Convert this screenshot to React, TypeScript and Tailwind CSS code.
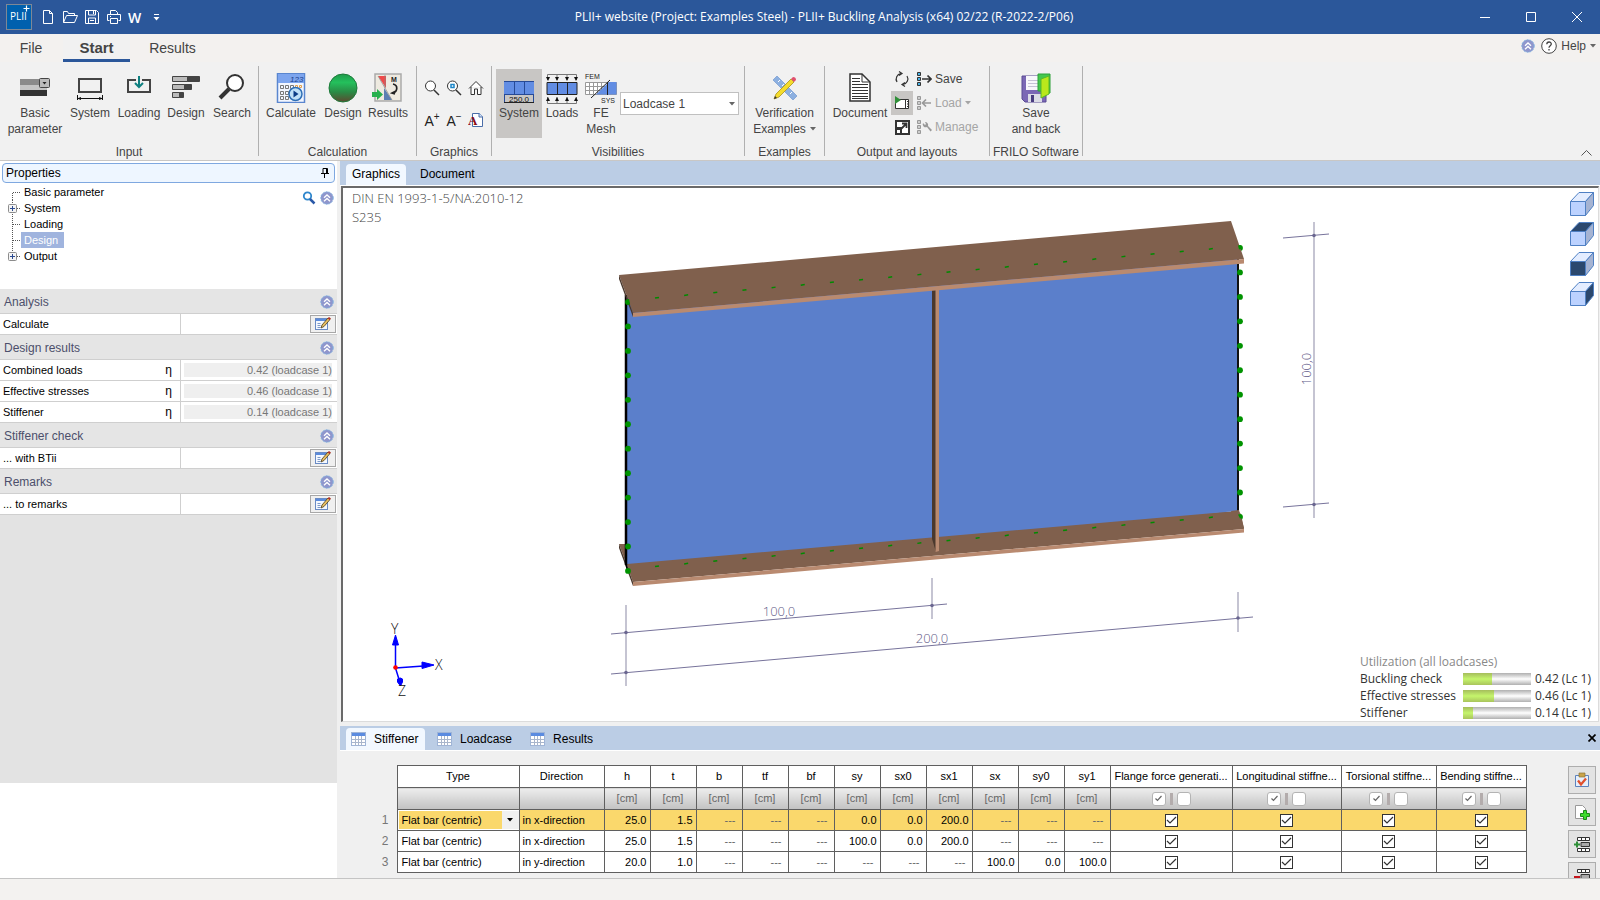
import React, { useState } from 'react';

/* ---------- small shared pieces ---------- */

const Caret: React.FC<{ className?: string }> = ({ className = 'fill-[#666]' }) => (
  <svg width="6" height="4" viewBox="0 0 6 4" className={className} aria-hidden="true">
    <path d="M0 0h6L3 3.6z" />
  </svg>
);

const CollapseBadge: React.FC = () => (
  <svg width="14" height="14" viewBox="0 0 14 14" aria-hidden="true">
    <circle cx="7" cy="7" r="6.2" fill="#8f96cc" stroke="#7fb0e0" strokeDasharray="2 1" />
    <path d="M4 6.8 7 4l3 2.8M4 10.3 7 7.5l3 2.8" fill="none" stroke="#fff" strokeWidth="1.3" />
  </svg>
);

const TickBox: React.FC<{ label: string; on?: boolean; soft?: boolean }> = ({ label, on = false, soft = false }) => {
  const [checked, setChecked] = useState(on);
  return (
    <span className="inline-grid place-items-center align-middle">
      <input
        type="checkbox"
        aria-label={label}
        checked={checked}
        onChange={() => setChecked(!checked)}
        className={
          soft
            ? 'col-start-1 row-start-1 size-3.5 appearance-none rounded-[3px] border border-[#b4b4b4] bg-white'
            : 'col-start-1 row-start-1 size-[13px] appearance-none border border-[#333] bg-white'
        }
      />
      {checked && (
        <svg width="11" height="11" viewBox="0 0 11 11" className="pointer-events-none col-start-1 row-start-1">
          <path d={soft ? 'M2.5 5.5l2 2 4-4.5' : 'M1 5l3 3 6-6'} fill="none" stroke={soft ? '#666' : '#333'} strokeWidth="1.2" />
        </svg>
      )}
    </span>
  );
};

/* ---------- title bar ---------- */

const TitleBar: React.FC = () => (
  <header className="flex h-[34px] shrink-0 items-center bg-[#2b579a] text-white">
    <div className="flex flex-1 items-center">
      <svg width="26" height="26" viewBox="0 0 26 26" className="ml-1.5">
        <rect x=".5" y=".5" width="25" height="25" fill="#0060ae" stroke="#7e8896" />
        <text x="4" y="16" fontSize="10" fill="#fff" fontFamily="Open Sans, sans-serif">PLII</text>
        <path d="M20.500 1.500v6M17.500 4.500h6" stroke="#fff" strokeWidth="1.2" />
      </svg>
      <button aria-label="New" className="ml-2.5">
        <svg width="12" height="16" viewBox="0 0 12 16" fill="none" stroke="#fff">
          <path d="M1.5 1.5h6l3 3v10h-9zM7.5 1.5v3h3" />
        </svg>
      </button>
      <button aria-label="Open" className="ml-2">
        <svg width="16" height="14" viewBox="0 0 16 14" fill="none" stroke="#fff">
          <path d="M1.5 12.5v-11h4l1 2h6v2M1.5 12.5l3-7h11l-3 7z" />
        </svg>
      </button>
      <button aria-label="Save" className="ml-1.5">
        <svg width="16" height="16" viewBox="0 0 16 16" fill="none" stroke="#fff">
          <path d="M1.5 1.5h11l2 2v11h-13zM4.5 1.5v4.500h7v-4.500M4.5 14.5v-5.500h7v5.500M9.5 2v3M6 11.5h4" />
        </svg>
      </button>
      <button aria-label="Print" className="ml-1.5">
        <svg width="16" height="16" viewBox="0 0 16 16" fill="none" stroke="#fff">
          <path d="M4.5 5.5v-4h5l2 2v2M3.5 11.5h-2v-6h13v6h-2M4.5 9.5h7v5h-7zM4 7.5h1" />
        </svg>
      </button>
      <button aria-label="Export to Word" className="ml-1.5 font-[Open_Sans,sans-serif] text-[14px] font-semibold">W</button>
      <button aria-label="Customize" className="ml-3">
        <svg width="7" height="7" viewBox="0 0 7 7" fill="#fff">
          <path d="M1 0h5v1H1zM.5 3h6L3.5 6.500z" />
        </svg>
      </button>
    </div>
    <h1 className="pl-12 font-[Open_Sans,sans-serif] text-[12px]">
      PLII+ website (Project: Examples Steel) - PLII+ Buckling Analysis (x64) 02/22 (R-2022-2/P06)
    </h1>
    <div className="flex flex-1 items-center justify-end">
      <button aria-label="Minimize" className="flex w-[46px] justify-center">
        <svg width="10" height="10" viewBox="0 0 10 10"><path d="M0 5.5h10" stroke="#fff" /></svg>
      </button>
      <button aria-label="Maximize" className="flex w-[46px] justify-center">
        <svg width="10" height="10" viewBox="0 0 10 10"><path d="M.5.5h9v9h-9z" fill="none" stroke="#fff" /></svg>
      </button>
      <button aria-label="Close" className="flex w-[46px] justify-center">
        <svg width="10" height="10" viewBox="0 0 10 10"><path d="M0 0l10 10M10 0L0 10" stroke="#fff" /></svg>
      </button>
    </div>
  </header>
);

const MenuTabs: React.FC = () => (
  <nav className="flex h-7 shrink-0 items-stretch bg-[#f3f1ef] text-[14px] text-[#444]">
    <button className="w-[62px]">File</button>
    <button className="ml-px w-[67px] border-b-3 border-[#2b579a] bg-[#f1f1f1] pt-[3px] text-[15px] font-bold">Start</button>
    <button className="w-[85px]">Results</button>
    <div className="flex-1" />
    <div className="flex items-center gap-1.5 pr-1 pb-1 text-[12px]">
      <button aria-label="Collapse"><CollapseBadge /></button>
      <button className="flex items-center gap-1">
        <svg width="16" height="16" viewBox="0 0 16 16" fill="none" stroke="#444">
          <circle cx="8" cy="8" r="7.3" fill="#fff" />
          <path d="M5.8 6.3c0-3 4.5-3 4.5-.3 0 1.7-2.300 1.800-2.300 3.800M8 11v1.500" strokeWidth="1.3" />
        </svg>
        Help
        <Caret />
      </button>
    </div>
  </nav>
);

/* ---------- ribbon icons ---------- */

const IconBasic = () => (
  <svg width="32" height="26" viewBox="0 0 32 26">
    <path d="M1 6h27v6H1z" fill="#8a8a8a" />
    <path d="M1 12h27v5H1z" fill="#c4c4c4" />
    <path d="M1 17h27v6H1z" fill="#333" />
    <rect x="20.500" y="5.500" width="10" height="9" rx="1" fill="#bcbcbc" stroke="#444" />
    <path d="M23.500 9h4l-2 2.500z" fill="#222" />
  </svg>
);
const IconSystem = () => (
  <svg width="28" height="28" viewBox="0 0 28 28" fill="none" stroke="#444">
    <path d="M3 6h22v13H3z" strokeWidth="2" />
    <path d="M1.5 22v5M26.5 22v5M2 25.5h24" stroke="#111" />
    <path d="M1 25.5l4-1.5v3zM27 25.5l-4-1.5v3z" fill="#111" stroke="none" />
  </svg>
);
const IconLoading = () => (
  <svg width="26" height="28" viewBox="0 0 26 28" fill="none">
    <path d="M10 7H2v12h22V7h-8" stroke="#444" strokeWidth="2" />
    <path d="M13 3v11M9 10l4 4 4-4" stroke="#0e8080" strokeWidth="2" />
  </svg>
);
const IconDesign = () => (
  <svg width="30" height="26" viewBox="0 0 30 26" stroke="#444">
    <path d="M1.5 3.5h15v5h-15zM1.5 11.5h12v5h-12zM1.5 19.500h7v5h-7z" fill="#bbb" />
    <path d="M16.5 3.5h12v5h-12zM13.5 11.5h7v5h-7zM8.5 19.500h4v5h-4z" fill="#444" />
  </svg>
);
const IconSearch = () => (
  <svg width="28" height="28" viewBox="0 0 28 28" fill="none" stroke="#333">
    <circle cx="17" cy="10" r="8" strokeWidth="2" fill="#fff" />
    <path d="M11 16l-9 9" strokeWidth="4" />
  </svg>
);
const IconCalculate = () => (
  <svg width="30" height="30" viewBox="0 0 30 30">
    <rect x="1.500" y=".5" width="27" height="29" fill="#f2f6ff" stroke="#5a86cf" strokeWidth="1.5" />
    <path d="M2 1h26v9H2z" fill="#7da5ee" />
    <text x="14" y="8.500" fontSize="8" fontStyle="italic" fill="#1b3f8b" fontFamily="Liberation Sans, sans-serif">123</text>
    <g fill="none" stroke="#777">
      <path d="M4.5 12.5h3v3h-3zM9.5 12.5h3v3h-3zM14.5 12.5h3v3h-3zM4.5 18.5h3v3h-3zM9.5 18.5h3v3h-3zM4.5 23.5h3v3h-3zM9.5 23.5h3v3h-3z" />
      <path d="M19.5 12.5h2v2h-2zM23.500 12.5h2v2h-2z" stroke="#e3a04b" />
    </g>
    <circle cx="19.500" cy="21" r="6.500" fill="#bfe0f8" stroke="#2e6eb5" strokeWidth="1.5" />
    <path d="M17.5 17.5v7l5-3.500z" fill="#0b3b86" />
  </svg>
);
const IconGreenBall = () => (
  <svg width="30" height="30" viewBox="0 0 30 30">
    <defs>
      <linearGradient id="ball" x1="0" y1="0" x2="0" y2="1">
        <stop offset="0" stopColor="#1f9a4b" />
        <stop offset=".3" stopColor="#24c05c" />
        <stop offset=".65" stopColor="#2a8a45" />
        <stop offset="1" stopColor="#5c4a30" />
      </linearGradient>
    </defs>
    <circle cx="15" cy="15" r="14" fill="url(#ball)" stroke="#1d7a3a" />
  </svg>
);
const IconResults = () => (
  <svg width="32" height="30" viewBox="0 0 32 30">
    <rect x="3" y="1" width="26" height="27" fill="#eeeae0" stroke="#aaa" strokeWidth="1.5" />
    <path d="M6 3h8v12z" fill="#f04a4a" />
    <path d="M12 15v12h8z" fill="#5c7fb2" />
    <path d="M13 15V2M6 3l14 24" stroke="#888" strokeWidth=".7" />
    <text x="19" y="9" fontSize="7" fontWeight="bold" fill="#222" fontFamily="Liberation Sans, sans-serif">M</text>
    <path d="M21 11c5 1 5 7 0 9M24 18l-4 2 3 1" fill="none" stroke="#222" strokeWidth="1.7" />
    <path d="M0 19h5v-3l6 5.500-6 5.500v-3H0z" fill="#27b04e" />
  </svg>
);
const IconVisSystem = () => (
  <svg width="32" height="30" viewBox="0 0 32 30">
    <path d="M1 8h30v14H1z" fill="#628de3" />
    <path d="M1 8.500h30M1 21.500h30M11.500 8v14M21.500 8v14M1.500 22v7M30.500 22v7" stroke="#274a96" />
    <path d="M1 29.500h30" stroke="#222" />
    <text x="16" y="29" fontSize="8" textAnchor="middle" fill="#111" fontFamily="Liberation Sans, sans-serif">250.0</text>
  </svg>
);
const IconLoads = () => (
  <svg width="32" height="32" viewBox="0 0 32 32">
    <path d="M1 9h30v13H1z" fill="#628de3" />
    <path d="M1 9.500h30v12H1zM11.500 9v13M21.500 9v13" fill="none" stroke="#222" />
    <path d="M1.500 7V1.500h29V7M11 2v5M21 2v5M1.500 24v6.500h29V24M11 24v6M21 24v6" fill="none" stroke="#777" />
    <path d="M0 4h4L2 8zM9 4h4l-2 4zM19 4h4l-2 4zM28 4h4l-2 4zM0 28h4l-2-4zM9 28h4l-2-4zM19 28h4l-2-4zM28 28h4l-2-4z" fill="#111" />
  </svg>
);
const IconMesh = () => (
  <svg width="34" height="32" viewBox="0 0 34 32">
    <text x="1" y="6" fontSize="7" fill="#222" fontFamily="Liberation Sans, sans-serif">FEM</text>
    <text x="17" y="30" fontSize="7" fill="#222" fontFamily="Liberation Sans, sans-serif">SYS</text>
    <path d="M1.500 9.500h31v12h-31zM1 13.500h20M1 17.500h16M5.500 9v13M9.500 9v13M13.500 9v13M17.500 9v8" fill="#fff" stroke="#999" />
    <path d="M12 21.500L25 9h7.500v12.500z" fill="#628de3" />
    <path d="M23.500 9v13M7 25L26 7" stroke="#222" />
  </svg>
);
const IconVerify = () => (
  <svg width="28" height="28" viewBox="0 0 28 28">
    <g transform="translate(1 2)">
      <path d="M1 5l4-4 20 20-4 4z" fill="#8db0e0" stroke="#8aaad8" />
      <path d="M6 7l2-2M10 11l2-2M14 15l2-2M18 19l2-2" stroke="#fff" />
      <path d="M2 24l2-5L19 4l3 3L7 22z" fill="#f4dc2c" stroke="#a8911d" strokeWidth=".8" />
      <path d="M19 4l2-2q3 0 3 3l-2 2z" fill="#e0506e" />
      <path d="M2 24l1-3 2 2z" fill="#333" />
    </g>
  </svg>
);
const IconDocument = () => (
  <svg width="22" height="29" viewBox="0 0 22 29" fill="none" stroke="#333">
    <path d="M1 1h12l8 8v19H1z" fill="#fff" strokeWidth="1.5" />
    <path d="M13 1v8h8M3 5.500h8M3 8.500h8M3 11.500h16M3 14.500h16M3 17.500h16M3 20.500h16M3 23.500h16M3 25.500h16" />
  </svg>
);
const IconSaveBack = () => (
  <svg width="30" height="30" viewBox="0 0 30 30">
    <path d="M1 3h24v26H4l-3-3z" fill="#7b68b5" stroke="#5a4a94" />
    <path d="M5 3h14v14H5z" fill="#f7f7fb" />
    <path d="M7 7.500h10M7 10.500h10M7 13.500h10" stroke="#c5c3d6" />
    <path d="M7 21h14v8H7z" fill="#dcdce6" />
    <path d="M10 22h3v7h-3z" fill="#4a3d80" />
    <path d="M17 1h12v19h-4v-2h-8z" fill="#43c84e" stroke="#2da038" />
    <path d="M20 6l8-3v18l-8 4z" fill="#b9e81c" stroke="#57b82a" />
  </svg>
);

const LayoutIcon: React.FC<{ kind: 'save' | 'load' | 'manage' }> = ({ kind }) => {
  const c = kind === 'save' ? '#333' : '#999';
  return (
    <svg width="15" height="15" viewBox="0 0 15 15">
      <path d="M.5.5h3v3h-3zM.5 5.500h3v3h-3zM.5 10.500h3v3h-3z" fill={kind === 'save' ? '#4bb3e8' : '#ccc'} stroke={c} />
      {kind === 'save' && <path d="M5 7h9M10.500 3.500L14 7l-3.500 3.500" fill="none" stroke={c} strokeWidth="1.7" />}
      {kind === 'load' && <path d="M14 7H6M9 3.500L5.500 7 9 10.500" fill="none" stroke={c} strokeWidth="1.7" />}
      {kind === 'manage' && <path d="M6 3a3 3 0 0 0 4 4l3.500 4.500 1.500-1.500L11 6a3 3 0 0 0-3-4l1 2-1 1z" fill={c} />}
    </svg>
  );
};

/* ---------- ribbon ---------- */

const Group: React.FC<{ title: string; width: string; pad?: string; children: React.ReactNode }> = ({ title, width, pad = '', children }) => (
  <>
    <section className={`flex shrink-0 flex-col ${width}`}>
      <div className={`flex flex-1 items-start pt-[7px] ${pad}`}>{children}</div>
      <h2 className="h-4 text-center leading-4 whitespace-nowrap">{title}</h2>
    </section>
    <div className="my-1 w-px shrink-0 bg-[#b0b0b0]" />
  </>
);

const BigButton: React.FC<{ icon: React.ReactNode; label: React.ReactNode; width: string; active?: boolean }> = ({ icon, label, width, active }) => (
  <button className={`flex h-[69px] shrink-0 flex-col items-center pt-1 leading-4 ${width} ${active ? 'bg-[#c8c6c4]' : ''}`}>
    <span className="flex h-8 items-start justify-center">{icon}</span>
    <span className="text-center">{label}</span>
  </button>
);

const graphicsTools = [
  { name: 'Zoom', body: <><circle cx="6.5" cy="6" r="5" fill="#fff" /><path d="M10 10l5 5" strokeWidth="1.5" /></> },
  { name: 'Zoom window', body: <><circle cx="6.5" cy="6" r="5" fill="#fff" /><path d="M10 10l5 5" strokeWidth="1.5" /><path d="M5 4.500h3v3H5z" stroke="#1d86c8" strokeWidth="1.5" /></> },
  { name: 'Home', body: <path d="M1 8.500L8 1.500l7 7M3 7v7.500h3.500V9h3v5.500H13V7" fill="#fff" /> },
];

const Ribbon: React.FC = () => (
  <div className="flex h-[99px] shrink-0 border-b border-[#c9c7c5] bg-[#f1f1f1] text-[12px] text-[#444]">
    <Group title="Input" width="w-[258px]" pad="pl-[6px]">
      <BigButton width="w-[58px]" icon={<IconBasic />} label={<>Basic<br />parameter</>} />
      <BigButton width="w-[52px]" icon={<IconSystem />} label="System" />
      <BigButton width="w-[46px]" icon={<IconLoading />} label="Loading" />
      <BigButton width="w-[48px]" icon={<IconDesign />} label="Design" />
      <BigButton width="w-[44px]" icon={<IconSearch />} label="Search" />
    </Group>
    <Group title="Calculation" width="w-[157px]" pad="pl-[2px]">
      <BigButton width="w-[60px]" icon={<IconCalculate />} label="Calculate" />
      <BigButton width="w-[44px]" icon={<IconGreenBall />} label="Design" />
      <BigButton width="w-[46px]" icon={<IconResults />} label="Results" />
    </Group>
    <Group title="Graphics" width="w-[74px]">
      <div className="grid grid-cols-3 gap-x-1.5 gap-y-4 pt-[11px] pl-[7px]">
        {graphicsTools.map((tool) => (
          <button key={tool.name} aria-label={tool.name} className="size-4">
            <svg width="16" height="16" viewBox="0 0 16 16" fill="none" stroke="#333">{tool.body}</svg>
          </button>
        ))}
        <button className="flex size-4 items-start justify-center text-[14px] leading-[18px] text-[#222]">
          A<span className="text-[10px] leading-2.5">+</span>
        </button>
        <button className="flex size-4 items-start justify-center text-[14px] leading-[18px] text-[#222]">
          A<span className="text-[10px] leading-2.5">−</span>
        </button>
        <button aria-label="Text style" className="size-4">
          <svg width="16" height="16" viewBox="0 0 16 16">
            <path d="M4.500 1.500h7l3 3v10h-10z" fill="#fff" stroke="#4a6da8" />
            <path d="M11 1v4h4" fill="#cfe0f6" stroke="#4a6da8" />
            <text x="0" y="13" fontSize="13" fontWeight="bold" fill="#8c0a14" fontFamily="Liberation Serif, serif">A</text>
          </svg>
        </button>
      </div>
    </Group>
    <Group title="Visibilities" width="w-[252px]" pad="pl-1">
      <BigButton width="w-[46px]" active icon={<IconVisSystem />} label="System" />
      <BigButton width="w-10" icon={<IconLoads />} label="Loads" />
      <BigButton width="w-[38px]" icon={<IconMesh />} label={<>FE<br />Mesh</>} />
      <div className="mt-[23px] grid items-center">
        <select aria-label="Loadcase" className="col-start-1 row-start-1 h-[23px] w-[119px] appearance-none border border-[#c0c0c0] bg-white pl-0.5">
          <option>Loadcase 1</option>
        </select>
        <span className="pointer-events-none col-start-1 row-start-1 mr-1 justify-self-end"><Caret /></span>
      </div>
    </Group>
    <Group title="Examples" width="w-[79px]">
      <BigButton
        width="w-[79px]"
        icon={<IconVerify />}
        label={<>Verification<br /><span className="flex items-center gap-1">Examples <Caret /></span></>}
      />
    </Group>
    <Group title="Output and layouts" width="w-[164px]" pad="pl-1">
      <BigButton width="w-[62px]" icon={<IconDocument />} label="Document" />
      <div className="-mt-0.5 flex flex-col">
        <button aria-label="Refresh" className="flex h-6 w-[22px] items-center justify-center">
          <svg width="16" height="16" viewBox="0 0 16 16" fill="none" stroke="#333" strokeWidth="1.2">
            <path d="M7 2.500A5.600 5.600 0 0 0 3 11M9 13.500A5.600 5.600 0 0 0 13 5M5 .5l3 2-3 2M11 11.500l-3 2 3 2" />
          </svg>
        </button>
        <button aria-label="Run" className="flex h-6 w-[22px] items-center justify-center bg-[#c8c6c4]">
          <svg width="16" height="14" viewBox="0 0 16 14">
            <path d="M1.500 3.500h13v9h-13z" fill="#fff" stroke="#333" />
            <path d="M11.500 3v10M13 5.500h1M13 8h1M13 10.500h1" stroke="#333" />
            <path d="M1 0l6 4-6 4z" fill="#2f8f38" />
          </svg>
        </button>
        <button aria-label="Expand" className="flex h-6 w-[22px] items-center justify-center">
          <svg width="15" height="15" viewBox="0 0 15 15">
            <path d="M1 1h13v13H1z" fill="#fff" stroke="#333" strokeWidth="2" />
            <path d="M0 7h7v8H0z" fill="#333" />
            <path d="M2 10h3v3H2z" fill="#fff" />
            <path d="M6.500 8.500l5-5M7 3.500h4.500V8" fill="none" stroke="#333" strokeWidth="1.8" />
          </svg>
        </button>
      </div>
      <div className="-mt-0.5 flex flex-col pl-1">
        <button className="flex h-6 items-center gap-[3px]"><LayoutIcon kind="save" />Save</button>
        <button className="flex h-6 items-center gap-[3px] text-[#a5a5a5]"><LayoutIcon kind="load" />Load <Caret className="fill-[#a5a5a5]" /></button>
        <button className="flex h-6 items-center gap-[3px] text-[#a5a5a5]"><LayoutIcon kind="manage" />Manage</button>
      </div>
    </Group>
    <Group title="FRILO Software" width="w-[92px]">
      <BigButton width="w-[92px]" icon={<IconSaveBack />} label={<>Save<br />and back</>} />
    </Group>
    <div className="flex flex-1 items-end justify-end pr-2 pb-1">
      <button aria-label="Collapse ribbon">
        <svg width="11" height="6" viewBox="0 0 11 6"><path d="M.5 5.500l5-5 5 5" fill="none" stroke="#555" /></svg>
      </button>
    </div>
  </div>
);

/* ---------- properties panel ---------- */

const treeItems = [
  { label: 'Basic parameter' },
  { label: 'System', expandable: true },
  { label: 'Loading' },
  { label: 'Design', selected: true },
  { label: 'Output', expandable: true },
];

const EditButton: React.FC<{ label: string }> = ({ label }) => (
  <button aria-label={label} className="mr-px flex h-[18px] w-[26px] items-center justify-center border border-[#a8a8a8] bg-[#f0f0f0]">
    <svg width="16" height="14" viewBox="0 0 16 14">
      <rect x=".5" y="1.500" width="12" height="11" fill="#f4f8ff" stroke="#6a8bc4" />
      <path d="M1 2h11v2H1z" fill="#5b8bdc" />
      <path d="M2.500 6.500h3M2.500 8.500h3M2.500 10.500h3" stroke="#7c99c8" />
      <path d="M6 11l1-3 6-7 2 1.500-6 7z" fill="#e8bf62" stroke="#4a3b1c" strokeWidth=".8" />
      <path d="M12.500 1.500L14 0l2 1.500-1.300 1.500z" fill="#b03428" />
    </svg>
  </button>
);

const PropertySection: React.FC<{ title: string; children: React.ReactNode }> = ({ title, children }) => (
  <section>
    <h3 className="flex h-[25px] items-center justify-between border-b border-[#cfcfcf] bg-[#e5e5e5] pt-0.5 pr-[3px] pl-1 text-[12px] text-[#4c4f6b]">
      {title}
      <button aria-label={`Collapse ${title}`}><CollapseBadge /></button>
    </h3>
    {children}
  </section>
);

const PropertyRow: React.FC<{ label: string; symbol?: string; value?: string }> = ({ label, symbol, value }) => (
  <div className="flex h-[21px] border-b border-[#cfcfcf] bg-white">
    <div className="flex w-[181px] items-center justify-between border-r border-[#cfcfcf] pr-2 pl-[3px]">
      <span>{label}</span>
      <span className="text-[12px]">{symbol}</span>
    </div>
    <div className="flex flex-1 items-center justify-end">
      {value ? (
        <output className="mr-[5px] ml-[3px] h-3.5 flex-1 bg-[#efefef] text-right leading-3.5 text-[#777]">{value}</output>
      ) : (
        <EditButton label={label} />
      )}
    </div>
  </div>
);

const PropertiesPanel: React.FC = () => (
  <aside className="flex w-[337px] shrink-0 flex-col bg-white text-[11px] text-black">
    <div className="mx-[2px] mt-[2px] flex h-5 shrink-0 items-center justify-between rounded-sm border border-[#7fa8e0] bg-[#eef6ff] px-[3px] text-[12px]">
      Properties
      <button aria-label="Pin" className="mr-0.5">
        <svg width="8" height="10" viewBox="0 0 8 10" fill="none" stroke="#000"><path d="M2 .5h4.500v5H2zM5.500 1v5M0 5.500h8M3.500 6v4" /></svg>
      </button>
    </div>
    <div className="flex h-[106px] shrink-0 pt-px">
      <ul className="flex-1">
        {treeItems.map((item) => (
          <li key={item.label} className="flex h-4 items-center">
            <svg width="13" height="16" viewBox="0 0 13 16" className="ml-2">
              <path d={item.label === 'Basic parameter' ? 'M4.5 9v7M5 8.5h8' : item.label === 'Output' ? 'M4.5 0v8M5 8.5h8' : 'M4.5 0v16M5 8.5h8'} stroke="#555" strokeDasharray="1 1" fill="none" />
              {item.expandable && (
                <>
                  <rect x=".5" y="4.500" width="8" height="8" rx="1" fill="#f4f4f4" stroke="#8c8c8c" />
                  <path d="M2 8.500h5M4.500 6v5" stroke="#2b4a90" />
                </>
              )}
            </svg>
            <button className={item.selected ? 'h-4 bg-[#a0b4de] pr-1.5 pl-[3px] leading-4 text-white' : 'h-4 pl-[3px] leading-4'}>{item.label}</button>
          </li>
        ))}
      </ul>
      <div className="flex items-start gap-1 pt-[7px] pr-[3px]">
        <button aria-label="Find property">
          <svg width="14" height="14" viewBox="0 0 14 14" fill="none">
            <circle cx="5.500" cy="5" r="3.700" stroke="#2e86cc" strokeWidth="1.8" />
            <path d="M8 8l4.500 4.500" stroke="#2a59a8" strokeWidth="2.5" />
          </svg>
        </button>
        <button aria-label="Collapse all"><CollapseBadge /></button>
      </div>
    </div>
    <PropertySection title="Analysis">
      <PropertyRow label="Calculate" />
    </PropertySection>
    <PropertySection title="Design results">
      <PropertyRow label="Combined loads" symbol="η" value="0.42 (loadcase 1)" />
      <PropertyRow label="Effective stresses" symbol="η" value="0.46 (loadcase 1)" />
      <PropertyRow label="Stiffener" symbol="η" value="0.14 (loadcase 1)" />
    </PropertySection>
    <PropertySection title="Stiffener check">
      <PropertyRow label="... with BTii" />
    </PropertySection>
    <PropertySection title="Remarks">
      <PropertyRow label="... to remarks" />
    </PropertySection>
    <div className="flex-1 bg-[#e3e3e3]" />
    <div className="h-[95px] shrink-0" />
  </aside>
);

/* ---------- 3D model view ---------- */

const supports = Array.from({ length: 12 }, (_, i) => i);
const rivets = Array.from({ length: 20 }, (_, i) => i);

const ModelDrawing: React.FC = () => (
  <svg viewBox="343 188 1255 533" className="h-full w-full" role="img" aria-label="Stiffened plate model">
    {/* bottom flange */}
    <path d="M619 544h8l611-33 3 3 3 15-611 53z" fill="#80604d" />
    <path d="M633 582l611-53v3.500L633 586z" fill="#b98a70" />
    <path d="M619 544l14 38v4l-14-38z" fill="#4a382d" />
    {/* web */}
    <path d="M627 295L1237 245v266L627 564z" fill="#5b7fcb" />
    <path d="M626 295v270" stroke="#000" strokeWidth="2.500" />
    <path d="M626 564l1.500 6" stroke="#000" strokeWidth="1.500" />
    <path d="M1238 258v253" stroke="#111" strokeWidth="2" />
    {/* supports along the vertical edges */}
    {supports.map((i) => (
      <g key={i} fill="#009300">
        <circle cx="628" cy={302 + i * 24.45} r="2.900" />
        <circle cx="1240" cy={248 + i * 24.45} r="2.900" />
      </g>
    ))}
    <path d="M1231 511l8-1 5 18-9 1z" fill="#80604d" />
    <path d="M1238 514.500q5-1 4 3.500l-2 .5z" fill="#009300" />
    {/* stiffener */}
    <path d="M932 289h4v263l-4-13z" fill="#4a382d" />
    <path d="M935.500 289h3.500v262l-3.500 1z" fill="#b98a70" />
    {/* top flange */}
    <path d="M619 275l612-54 13 38-611 54z" fill="#80604d" />
    <path d="M633 313l611-54v4.500L633 317z" fill="#b98a70" />
    <path d="M619 275l14 38v4l-14-38z" fill="#4a382d" />
    <path d="M626 301a3 3 0 0 1 3-2l1 5q-3 2-4-1zM1238 245.500q4-1 4 3l-3 1z" fill="#009300" />
    {rivets.map((i) => (
      <g key={i} stroke="#008a00" strokeWidth="1.500">
        <path d={`M${655 + i * 29.15} ${298 - i * 2.57}l4-.6`} />
        <path d={`M${655 + i * 29.15} ${566.5 - i * 2.57}l4-.6`} />
      </g>
    ))}
    {/* dimension lines */}
    <g stroke="#b3b1c4" strokeWidth="1.500">
      <path d="M1314 222v296M626 605v81M932 578v41M1238 592v40" />
    </g>
    <g stroke="#77739b">
      <path d="M1283 238l46-4M1283 507l46-4M611 634l336-30M611 674l642-57" />
    </g>
    <g fill="#6a6690">
      <circle cx="1314" cy="235.500" r="1.800" />
      <circle cx="1314" cy="504.500" r="1.800" />
      <circle cx="626" cy="632.500" r="1.800" />
      <circle cx="932" cy="605.500" r="1.800" />
      <circle cx="626" cy="672.500" r="1.800" />
      <circle cx="1238" cy="618" r="1.800" />
    </g>
    <g fill="#5f5b88" fontSize="13" fontWeight="300" fontFamily="Open Sans, sans-serif" textAnchor="middle">
      <text x="779" y="616">100,0</text>
      <text x="932" y="643">200,0</text>
      <text transform="translate(1311 369) rotate(-90)">100,0</text>
    </g>
    {/* axis cross */}
    <g stroke="#00f" strokeWidth="1.500" fill="#00f">
      <path d="M395.500 668v-24M395.500 668l28-2M395.500 668l4 13" />
      <path d="M395.500 635l3 10h-6zM434 665l-12-3v6.500z" strokeWidth="1" />
      <path d="M397.500 679q3-2 5 0v3l-2 4-3-4z" strokeWidth="1" />
    </g>
    <circle cx="395.500" cy="667.500" r="2.300" fill="#f00" />
    <g fill="#111" fontSize="14" fontWeight="300" fontFamily="Open Sans, sans-serif">
      <text x="391" y="634">Y</text>
      <text x="435" y="670">X</text>
      <text x="398" y="696">Z</text>
    </g>
  </svg>
);

const utilization = [
  { label: 'Buckling check', value: 0.42 },
  { label: 'Effective stresses', value: 0.46 },
  { label: 'Stiffener', value: 0.14 },
];

/* one face of each cube is darkened to name the viewing side */
const cubeViews = [
  { name: 'Isometric view', top: '#e4edff', front: '#bcd2ff', side: '#a5b3d2' },
  { name: 'Top view', top: '#2b486e', front: '#bcd2ff', side: '#a5b3d2' },
  { name: 'Front view', top: '#e4edff', front: '#2b486e', side: '#a5b3d2' },
  { name: 'Side view', top: '#e4edff', front: '#bcd2ff', side: '#2b486e' },
];

const GraphicsView: React.FC = () => (
  <div className="relative mr-px ml-px min-h-0 flex-1 border-t-2 border-r border-b border-l-2 border-t-[#6a6a6a] border-r-[#dcdcdc] border-b-[#dcdcdc] border-l-[#6a6a6a] bg-white font-[Open_Sans,sans-serif] text-[12px] text-[#333]">
    <ModelDrawing />
    <div className="absolute top-px left-[9px] text-[13px] leading-[19px] font-light text-[#444]">
      <p>DIN EN 1993-1-5/NA:2010-12</p>
      <p>S235</p>
    </div>
    <div className="absolute top-1 right-1 flex flex-col gap-1.5">
      {cubeViews.map((cube) => (
        <button key={cube.name} aria-label={cube.name}>
          <svg width="24" height="24" viewBox="0 0 24 24" stroke="#4f80c4" strokeLinejoin="round">
            <path d="M.5 9.500L9 .5h14.500l-8 9z" fill={cube.top} />
            <path d="M.5 9.500h15v14H.5z" fill={cube.front} />
            <path d="M15.500 9.500l8-9v13l-8 10z" fill={cube.side} />
          </svg>
        </button>
      ))}
    </div>
    <div className="absolute right-[3px] bottom-0 leading-[17px]">
      <p className="text-[#888]">Utilization (all loadcases)</p>
      {utilization.map((item) => (
        <div key={item.label} className="flex items-center">
          <span className="w-[103px] whitespace-nowrap">{item.label}</span>
          <span className="h-3 w-[68px] bg-linear-to-b from-[#b0b0b0] via-white to-[#b0b0b0]">
            <span className="block h-full bg-linear-to-b from-[#a5bd5c] via-[#c5f56c] to-[#a9c45c]" style={{ width: `${item.value * 100}%` }} />
          </span>
          <span className="ml-1 w-[60px] whitespace-nowrap">{item.value.toFixed(2)} (Lc 1)</span>
        </div>
      ))}
    </div>
  </div>
);

/* ---------- stiffener table ---------- */

const numberColumns = ['h', 't', 'b', 'tf', 'bf', 'sy', 'sx0', 'sx1', 'sx', 'sy0', 'sy1'];
const checkColumns = ['Flange force generati...', 'Longitudinal stiffne...', 'Torsional stiffne...', 'Bending stiffne...'];

const stiffeners = [
  { type: 'Flat bar (centric)', direction: 'in x-direction', values: ['25.0', '1.5', '---', '---', '---', '0.0', '0.0', '200.0', '---', '---', '---'] },
  { type: 'Flat bar (centric)', direction: 'in x-direction', values: ['25.0', '1.5', '---', '---', '---', '100.0', '0.0', '200.0', '---', '---', '---'] },
  { type: 'Flat bar (centric)', direction: 'in y-direction', values: ['20.0', '1.0', '---', '---', '---', '---', '---', '---', '100.0', '0.0', '100.0'] },
];

const StiffenerTable: React.FC = () => (
  <table className="w-[1160px] table-fixed border-collapse self-start text-[11px] text-black [&_td]:p-0 [&_th]:p-0 [&_th]:font-normal">
    <colgroup>
      <col className="w-[31px]" />
      <col className="w-[122px]" />
      <col className="w-[85px]" />
      {numberColumns.map((name) => <col key={name} className="w-[46px]" />)}
      <col className="w-[122px]" />
      <col className="w-[109px]" />
      <col className="w-[95px]" />
      <col className="w-[90px]" />
    </colgroup>
    <thead>
      <tr className="h-[22px]">
        <td />
        {['Type', 'Direction', ...numberColumns].map((name) => (
          <th key={name} className="border border-[#5f5f5f] bg-white">{name}</th>
        ))}
        {checkColumns.map((name) => (
          <th key={name} className="overflow-hidden border border-[#5f5f5f] bg-white whitespace-nowrap">{name}</th>
        ))}
      </tr>
      <tr className="h-[22px] text-[#666]">
        <td />
        <th className="border border-[#5f5f5f] bg-linear-to-b from-[#ededed] to-[#c2c2c2]" />
        <th className="border border-[#5f5f5f] bg-linear-to-b from-[#ededed] to-[#c2c2c2]" />
        {numberColumns.map((name) => (
          <th key={name} className="border border-[#5f5f5f] bg-linear-to-b from-[#ededed] to-[#c2c2c2]">[cm]</th>
        ))}
        {checkColumns.map((name) => (
          <th key={name} className="border border-[#5f5f5f] bg-linear-to-b from-[#ededed] to-[#c2c2c2]">
            <span className="flex items-center justify-center gap-1">
              <TickBox label={`Select all: ${name}`} on soft />
              <span className="h-3 w-[3px] bg-[#b3acac]" />
              <TickBox label={`Clear all: ${name}`} soft />
            </span>
          </th>
        ))}
      </tr>
    </thead>
    <tbody>
      {stiffeners.map((row, i) => (
        <tr key={i} className={i === 0 ? 'h-[21px] bg-[#fad86c]' : 'h-[21px] bg-white'}>
          <th className="bg-[#f0f0f0] text-[12px] leading-4 text-[#777]">
            <span className="block pr-2 text-right">{i + 1}</span>
          </th>
          <td className="border border-[#5f5f5f]">
            {i === 0 ? (
              <div className="grid items-center">
                <select aria-label="Type" className="col-start-1 row-start-1 h-5 w-full appearance-none border border-white bg-[#fad86c] pl-[3px]">
                  <option>{row.type}</option>
                </select>
                <span className="pointer-events-none col-start-1 row-start-1 flex h-[18px] w-[17px] items-center justify-center justify-self-end bg-[#f0f0f0]">
                  <Caret className="fill-black" />
                </span>
              </div>
            ) : (
              <span className="pl-1">{row.type}</span>
            )}
          </td>
          <td className="border border-[#5f5f5f]"><span className="pl-[3px]">{row.direction}</span></td>
          {row.values.map((value, k) => (
            <td key={k} className="border border-[#5f5f5f] text-right">
              <span className={value === '---' ? 'pr-[6px] text-[#666]' : 'pr-[3px]'}>{value}</span>
            </td>
          ))}
          {checkColumns.map((name) => (
            <td key={name} className="border border-[#5f5f5f] text-center leading-none">
              <TickBox label={`${name} ${i + 1}`} on />
            </td>
          ))}
        </tr>
      ))}
    </tbody>
  </table>
);

const TableIcon: React.FC = () => (
  <svg width="15" height="14" viewBox="0 0 15 14">
    <rect x=".5" y=".5" width="14" height="13" fill="#fff" stroke="#9fb4d6" />
    <path d="M1 1h13v3H1z" fill="#5a8be0" />
    <path d="M4.500 4v9.500M7.500 4v9.500M10.500 4v9.500M1 7.500h13M1 10.500h13" stroke="#a9b6cc" />
  </svg>
);

const tableActions = [
  {
    name: 'Check',
    body: (
      <>
        <path d="M1.500 3.500h13v11h-13z" fill="#e6effc" stroke="#5d83bd" />
        <path d="M5 1h6v4H5z" fill="#c9a34a" stroke="#8c7434" strokeWidth=".7" />
        <path d="M4 8.500l3 4 5-6" fill="none" stroke="#e0502e" strokeWidth="2.300" />
      </>
    ),
  },
  {
    name: 'Add page',
    body: (
      <>
        <path d="M1.500 1.500h7l3 3v10h-10z" fill="#fff" stroke="#9a9a9a" />
        <path d="M9.500 6.500h3v3h3v3h-3v3h-3v-3h-3v-3h3z" fill="#3ddb2c" stroke="#1b8a18" />
      </>
    ),
  },
  {
    name: 'Insert row',
    body: (
      <>
        <path d="M3.500 1.500h12v3h-12zM7.500 1.500v3M11.500 1.500v3M3.500 12.500h12v3h-12zM7.500 12.500v3M11.500 12.500v3" fill="#fff" stroke="#333" />
        <path d="M7 6.500h8.500v4H7z" fill="#aaa" stroke="#333" />
        <path d="M3 5.500v6M0 8.500h6" stroke="#2f8f38" strokeWidth="2" />
      </>
    ),
  },
  {
    name: 'Delete row',
    body: (
      <>
        <path d="M3.500 1.500h12v3h-12zM7.500 1.500v3M11.500 1.500v3M3.500 12.500h12v3h-12z" fill="#fff" stroke="#333" />
        <path d="M7 6.500h8.500v4H7z" fill="#aaa" stroke="#333" />
        <path d="M0 9h6" stroke="#c4141c" strokeWidth="2" />
      </>
    ),
  },
];

const DataPanel: React.FC = () => (
  <section className="mt-1 flex h-[152px] shrink-0 flex-col">
    <div className="flex h-[25px] shrink-0 items-end border-b border-white bg-[#bbcde5] pl-1.5 text-[12px] text-black">
      <button className="flex h-[22px] w-[79px] items-center gap-2 rounded-t bg-[#f2f8ff] pl-[5px]"><TableIcon />Stiffener</button>
      <button className="ml-3 flex h-[22px] items-center gap-2"><TableIcon />Loadcase</button>
      <button className="ml-[18px] flex h-[22px] items-center gap-2"><TableIcon />Results</button>
      <div className="flex-1" />
      <button aria-label="Close panel" className="mr-1 mb-2">
        <svg width="8" height="8" viewBox="0 0 8 8"><path d="M.5.5l7 7M7.500.5l-7 7" stroke="#000" strokeWidth="1.7" /></svg>
      </button>
    </div>
    <div className="flex min-h-0 flex-1 justify-between overflow-hidden bg-[#f0f0f0] pt-[14px] pr-1 pl-[26px]">
      <StiffenerTable />
      <div className="flex shrink-0 flex-col gap-1 pt-px">
        {tableActions.map((action) => (
          <button key={action.name} aria-label={action.name} className="flex size-7 shrink-0 items-center justify-center border border-[#adadad] bg-[#e3e3e3]">
            <svg width="16" height="17" viewBox="0 0 16 17">{action.body}</svg>
          </button>
        ))}
      </div>
    </div>
  </section>
);

/* ---------- page ---------- */

const App: React.FC = () => (
  <div className="flex h-screen flex-col overflow-hidden bg-[#f0f0f0] font-[Liberation_Sans,Arial,sans-serif]">
    <TitleBar />
    <MenuTabs />
    <Ribbon />
    <div className="flex min-h-0 flex-1">
      <PropertiesPanel />
      <main className="ml-[3px] flex min-w-0 flex-1 flex-col">
        <div className="flex h-6 shrink-0 items-end bg-[#bbcde5] pl-1.5 text-[12px] text-black">
          <button className="h-[21px] w-[60px] rounded-t bg-[#f2f8ff] pb-0.5">Graphics</button>
          <button className="ml-[14px] h-[21px] pb-0.5">Document</button>
        </div>
        <div className="h-px shrink-0 bg-white" />
        <GraphicsView />
        <DataPanel />
      </main>
    </div>
    <footer className="h-[22px] shrink-0 border-t border-[#c4c4c4] bg-[#f3f2f0]" />
  </div>
);

export default App;
